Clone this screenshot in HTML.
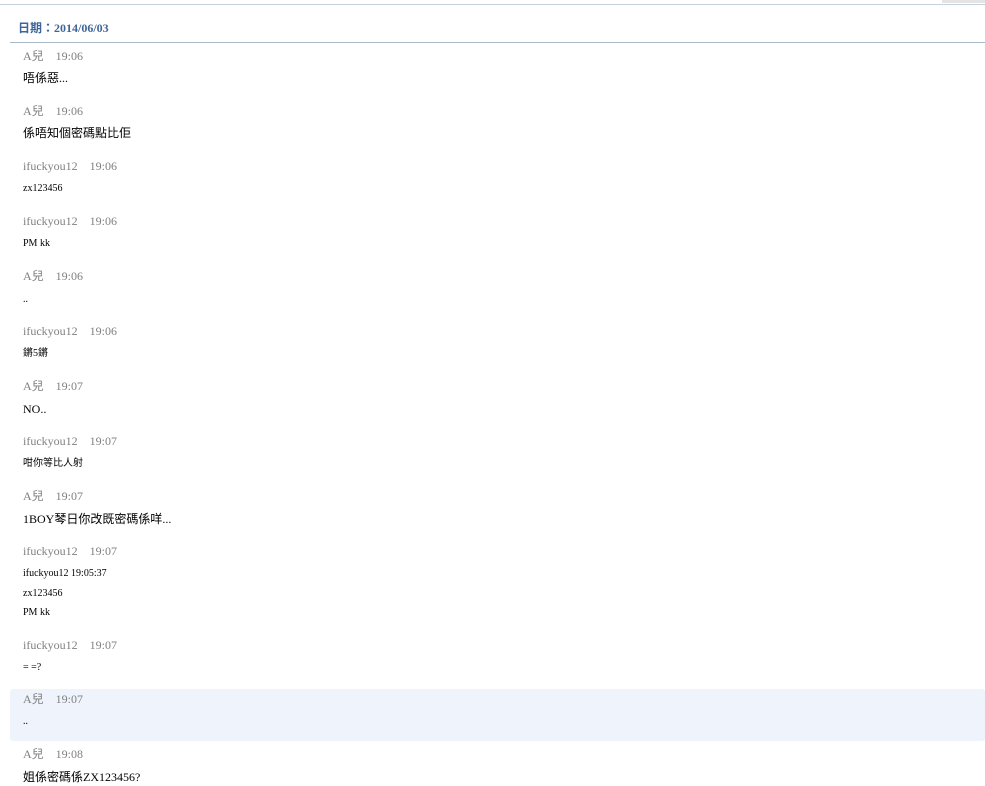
<!DOCTYPE html>
<html><head><meta charset="utf-8"><style>
body{margin:0;width:985px;height:786px;background:#fff;position:relative;overflow:hidden;font-family:"Liberation Serif","Noto Sans CJK TC",serif}
.a{position:absolute;left:23px;white-space:nowrap;line-height:14px}
.n{color:#808080;font-size:12px}
.n span{margin-left:12px}
.m{color:#000;font-size:12px}
.s{color:#000;font-size:10px}
</style></head><body>
<div style="position:absolute;left:0;top:4px;width:985px;height:1px;background:#c5d1dc"></div>
<div style="position:absolute;left:942px;top:0;width:43px;height:3px;background:#e4e4e4"></div>
<div style="position:absolute;left:18px;top:21px;font-size:12px;font-weight:bold;color:#3f6598;line-height:14px">日期：2014/06/03</div>
<div style="position:absolute;left:10px;top:42px;width:975px;height:1px;background:#a9b9c9"></div>
<div style="position:absolute;left:10px;top:689px;width:975px;height:52px;background:#eef3fc;border-radius:3px"></div>

<div class="a n" style="top:49px">A兒<span>19:06</span></div>
<div class="a m" style="top:71px">唔係惡...</div>
<div class="a n" style="top:104px">A兒<span>19:06</span></div>
<div class="a m" style="top:126px">係唔知個密碼點比佢</div>
<div class="a n" style="top:159px">ifuckyou12<span>19:06</span></div>
<div class="a s" style="top:182px">zx123456</div>
<div class="a n" style="top:214px">ifuckyou12<span>19:06</span></div>
<div class="a s" style="top:237px">PM kk</div>
<div class="a n" style="top:269px">A兒<span>19:06</span></div>
<div class="a s" style="top:293px">..</div>
<div class="a n" style="top:324px">ifuckyou12<span>19:06</span></div>
<div class="a s" style="top:347px">鏘5鏘</div>
<div class="a n" style="top:379px">A兒<span>19:07</span></div>
<div class="a m" style="top:402px">NO..</div>
<div class="a n" style="top:434px">ifuckyou12<span>19:07</span></div>
<div class="a s" style="top:457px">咁你等比人射</div>
<div class="a n" style="top:489px">A兒<span>19:07</span></div>
<div class="a m" style="top:512px">1BOY琴日你改既密碼係咩...</div>
<div class="a n" style="top:544px">ifuckyou12<span>19:07</span></div>
<div class="a s" style="top:567px">ifuckyou12 19:05:37</div>
<div class="a s" style="top:587px">zx123456</div>
<div class="a s" style="top:606px">PM kk</div>
<div class="a n" style="top:638px">ifuckyou12<span>19:07</span></div>
<div class="a s" style="top:661px">= =?</div>
<div class="a n" style="top:692px">A兒<span>19:07</span></div>
<div class="a s" style="top:715px">..</div>
<div class="a n" style="top:747px">A兒<span>19:08</span></div>
<div class="a m" style="top:770px">姐係密碼係ZX123456?</div>
</body></html>
